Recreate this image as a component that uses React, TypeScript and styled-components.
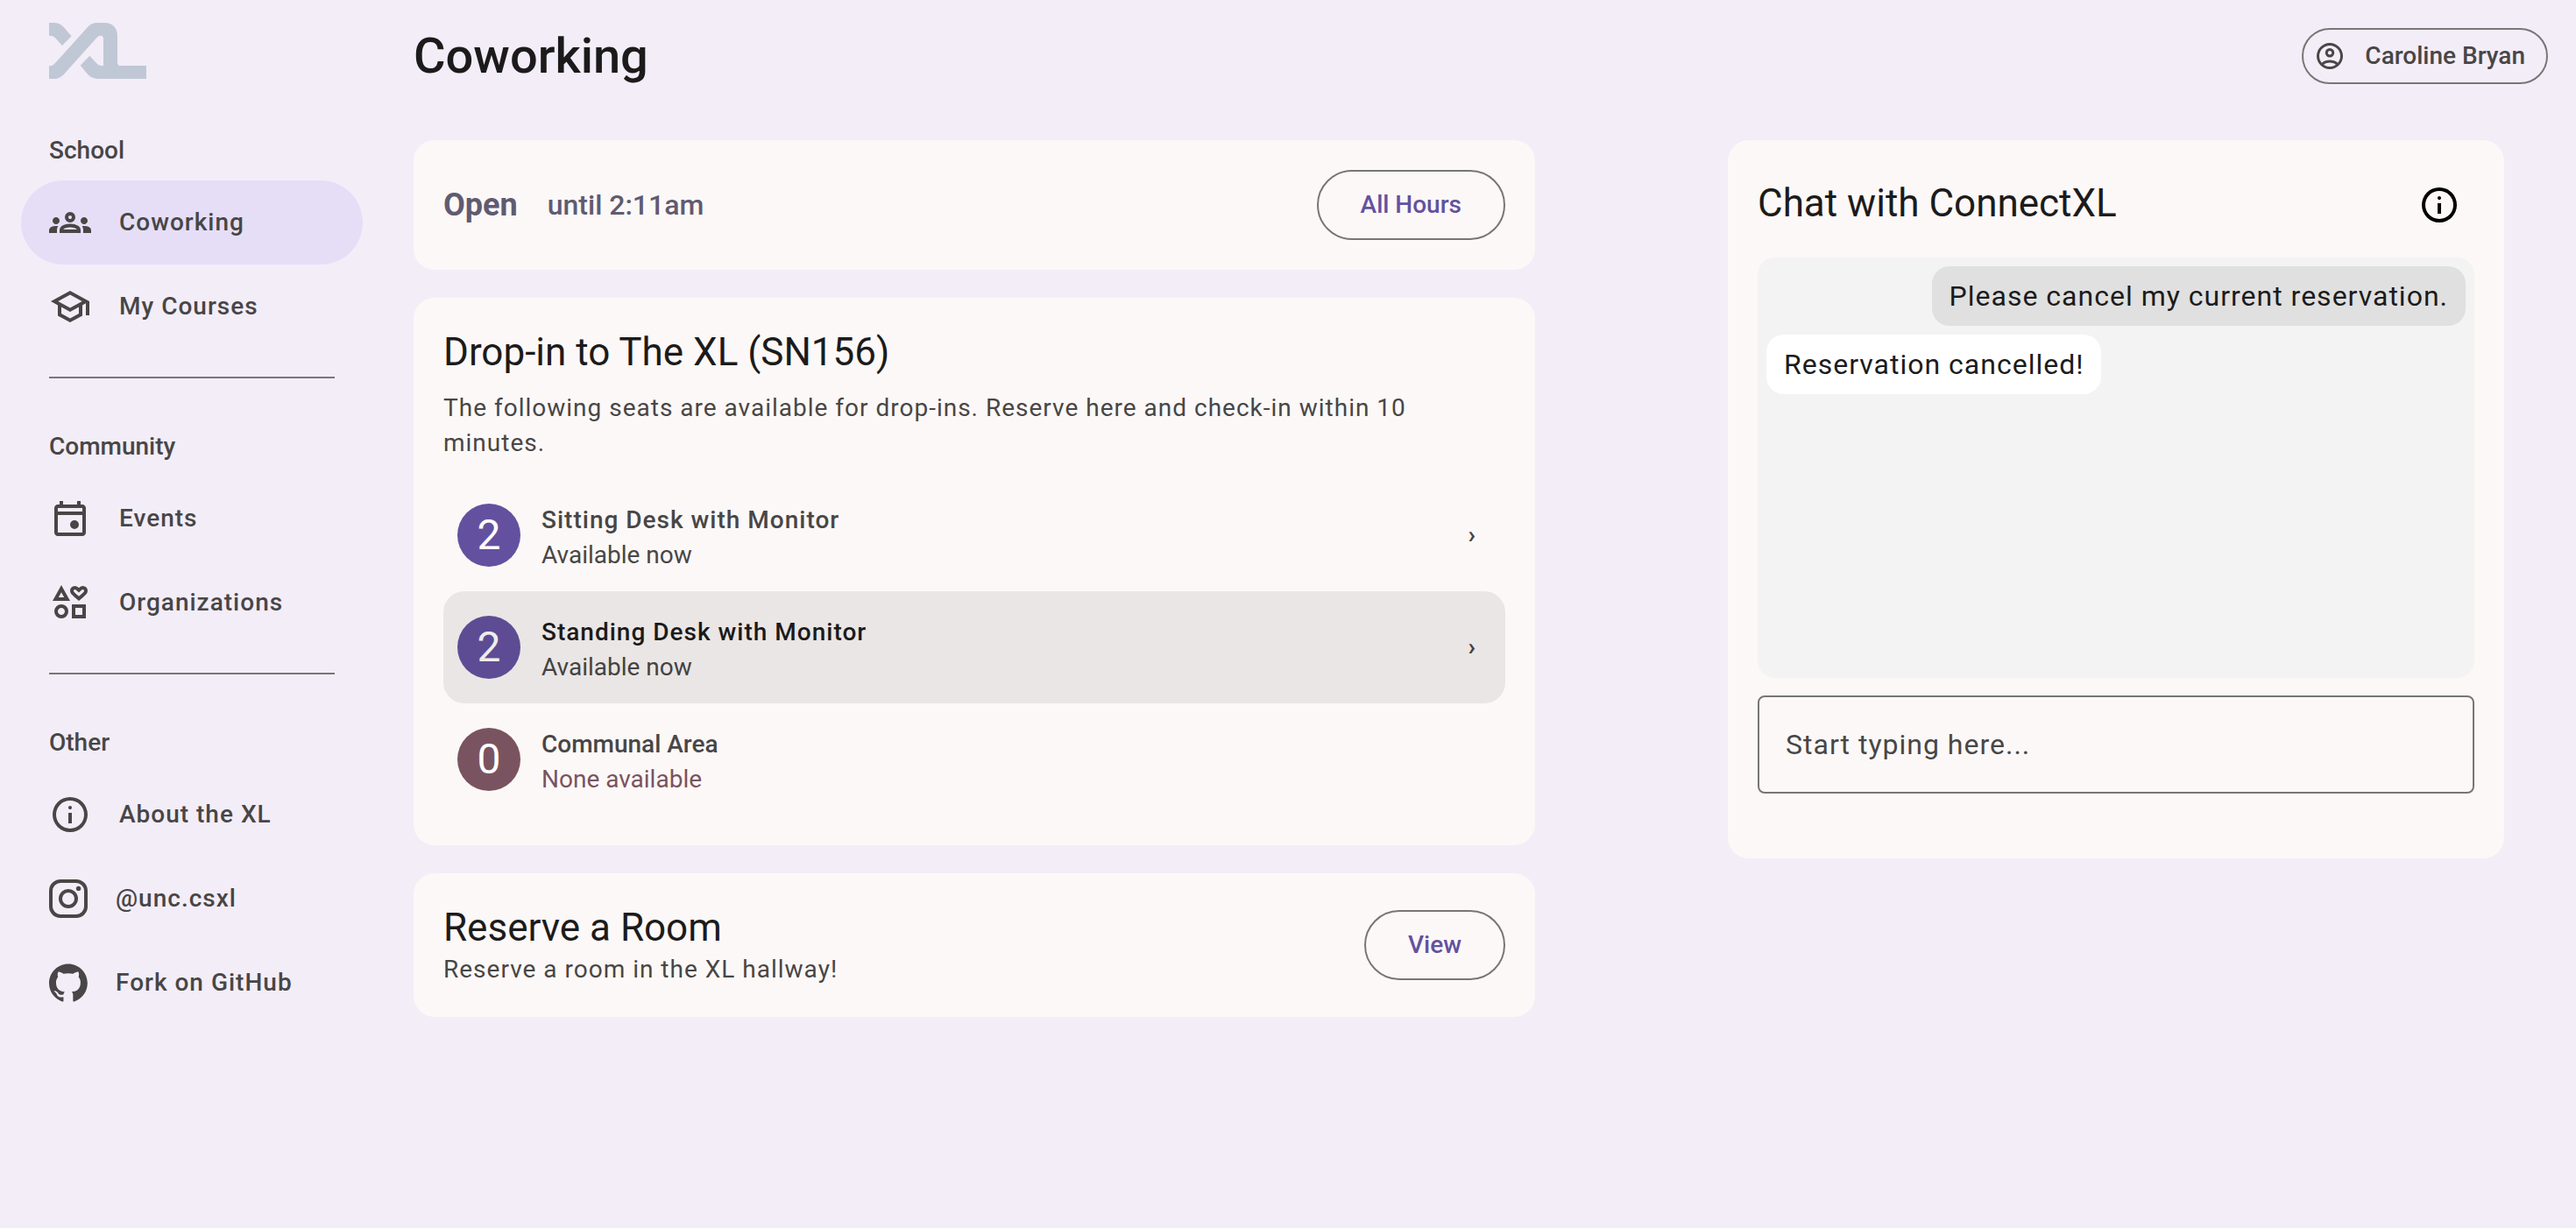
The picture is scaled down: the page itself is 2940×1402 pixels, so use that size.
import React from "react";
import styled, { createGlobalStyle } from "styled-components";

const color = {
  page: "#f3edf8",
  card: "#fcf8f7",
  active: "#e6def6",
  text: "#1c1b1b",
  muted: "#484646",
  outline: "#787675",
  primary: "#63519f",
  secondary: "#605b71",
  tertiary: "#7a5360",
};

const GlobalStyle = createGlobalStyle`
  *, *::before, *::after { box-sizing: border-box; }
  body {
    margin: 0;
    background: ${color.page};
    color: ${color.text};
    font-family: Roboto, "Noto Sans", sans-serif;
    font-size: 28px;
    line-height: 40px;
  }
  h1, h2, h3, p, ul { margin: 0; padding: 0; font-weight: 400; }
  ul { list-style: none; }
  button, input { font: inherit; color: inherit; }
  button { cursor: pointer; }
  a { color: inherit; text-decoration: none; }
`;

const Shell = styled.div`
  display: flex;
  min-height: 100vh;
`;

const Sidebar = styled.nav`
  flex: 0 0 438px;
  padding: 26px 24px;
  color: ${color.muted};
  font-weight: 500;
`;

const LogoLink = styled.a`
  display: block;
  height: 68px;
  padding-left: 32px;

  svg { display: block; }
`;

const SectionTitle = styled.h3`
  padding: 58px 32px 14px;
  font-size: 28px;
  font-weight: 500;
`;

const NavLink = styled.a<{ $active?: boolean }>`
  display: flex;
  align-items: center;
  gap: 32px;
  height: 96px;
  padding: 0 32px;
  border-radius: 48px;
  letter-spacing: 1px;
  background: ${(p) => (p.$active ? color.active : "transparent")};
`;

const Divider = styled.hr`
  height: 2px;
  margin: 32px 32px 0;
  border: 0;
  background: ${color.outline};
`;

const Main = styled.main`
  flex: 1;
  min-width: 0;
  padding-left: 34px;
`;

const TopBar = styled.header`
  display: flex;
  align-items: center;
  justify-content: space-between;
  height: 128px;
  padding-right: 32px;
`;

const PageTitle = styled.h1`
  font-size: 56px;
  line-height: 64px;
  font-weight: 500;
`;

const UserButton = styled.button`
  display: flex;
  align-items: center;
  gap: 22px;
  height: 64px;
  padding: 0 24px 0 12px;
  border: 2px solid ${color.outline};
  border-radius: 32px;
  background: transparent;
  color: ${color.muted};
  font-weight: 500;
`;

const Columns = styled.div`
  display: grid;
  grid-template-columns: minmax(0, 1280fr) minmax(0, 886fr);
  align-items: start;
  gap: 220px;
  padding: 32px 82px 32px 0;
`;

const Stack = styled.div`
  display: grid;
  gap: 32px;
`;

const Card = styled.section`
  padding: 34px;
  border-radius: 24px;
  background: ${color.card};
`;

const SplitRow = styled.div`
  display: flex;
  align-items: center;
  justify-content: space-between;
`;

const CardTitle = styled.h2`
  font-size: 44px;
  line-height: 56px;
`;

const ChatTitle = styled(CardTitle)`
  padding-bottom: 4px;
`;

const Hours = styled.p`
  display: flex;
  align-items: center;
  gap: 34px;
  font-size: 32px;
  font-weight: 500;
  color: ${color.secondary};
`;

const OpenLabel = styled.strong`
  font-size: 36px;
  font-weight: 700;
`;

const OutlineButton = styled.button`
  height: 80px;
  padding: 0 48px;
  border: 2px solid ${color.outline};
  border-radius: 40px;
  background: transparent;
  color: ${color.primary};
  font-weight: 500;
`;

const Body = styled.p`
  letter-spacing: 1px;
  color: ${color.muted};
`;

const SeatIntro = styled(Body)`
  margin: 16px 0 21px;
`;

const SeatRow = styled.button<{ $hovered?: boolean }>`
  position: relative;
  display: flex;
  align-items: center;
  gap: 24px;
  width: 100%;
  height: 128px;
  padding: 0 34px 0 16px;
  border: 0;
  border-radius: 24px;
  background: transparent;
  color: ${(p) => (p.$hovered ? color.text : color.muted)};
  text-align: left;
  overflow: hidden;

  &::after {
    content: "";
    position: absolute;
    inset: 0;
    background: ${color.text};
    opacity: ${(p) => (p.$hovered ? 0.08 : 0)};
  }
`;

const Count = styled.span<{ $empty: boolean }>`
  display: flex;
  align-items: center;
  justify-content: center;
  width: 72px;
  height: 72px;
  border-radius: 50%;
  background: ${(p) => (p.$empty ? color.tertiary : color.primary)};
  color: #fff;
  font-size: 48px;
`;

const SeatText = styled.span`
  display: grid;
  flex: 1;
  padding-top: 6px;
`;

const SeatName = styled.span<{ $empty: boolean }>`
  font-weight: 500;
  letter-spacing: ${(p) => (p.$empty ? "normal" : "1px")};
`;

const SeatStatus = styled.span<{ $empty: boolean }>`
  color: ${(p) => (p.$empty ? color.tertiary : color.muted)};
`;

const Chevron = styled.span`
  font-weight: 700;
  color: ${color.muted};
`;

const IconButton = styled.button`
  display: grid;
  place-items: center;
  width: 80px;
  height: 80px;
  padding: 0;
  border: 0;
  border-radius: 50%;
  background: transparent;
  color: #000;
`;

const Messages = styled.div`
  display: flex;
  flex-direction: column;
  gap: 10px;
  height: 480px;
  margin: 20px 0;
  padding: 10px;
  border-radius: 20px;
  background: #f3f3f3;
  overflow-y: auto;
`;

const Bubble = styled.p<{ $mine?: boolean }>`
  align-self: ${(p) => (p.$mine ? "flex-end" : "flex-start")};
  padding: 10px 20px;
  border-radius: 20px;
  background: ${(p) => (p.$mine ? "#e0e0e0" : "#fff")};
  font-size: 32px;
  line-height: 48px;
  letter-spacing: 1px;
`;

const ChatInput = styled.input`
  display: block;
  width: 100%;
  height: 112px;
  margin-bottom: 40px;
  padding: 0 30px;
  border: 2px solid ${color.outline};
  border-radius: 8px;
  background: transparent;
  font-size: 32px;
  letter-spacing: 1px;
  outline: none;

  &::placeholder { color: ${color.muted}; opacity: 1; }
`;

const symbols = {
  groups:
    "M0-240v-63q0-43 44-70t116-27q13 0 25 .5t23 2.5q-14 21-21 44t-7 48v65H0Zm240 0v-65q0-32 17.5-58.5T307-410q32-20 76.5-30t96.5-10q53 0 97.5 10t76.5 30q32 20 49 46.5t17 58.5v65H240Zm540 0v-65q0-26-6.5-49T754-397q11-2 22.5-2.5t23.5-.5q72 0 116 26.5t44 70.5v63H780Zm-455-80h311q-10-20-55.5-35T480-370q-55 0-100.5 15T325-320ZM160-440q-33 0-56.5-23.5T80-520q0-34 23.5-57t56.5-23q34 0 57 23t23 57q0 33-23 56.5T160-440Zm640 0q-33 0-56.5-23.5T720-520q0-34 23.5-57t56.5-23q34 0 57 23t23 57q0 33-23 56.5T800-440Zm-320-40q-50 0-85-35t-35-85q0-51 35-85.5t85-34.5q51 0 85.5 34.5T600-600q0 50-34.5 85T480-480Zm0-80q17 0 28.5-11.5T520-600q0-17-11.5-28.5T480-640q-17 0-28.5 11.5T440-600q0 17 11.5 28.5T480-560Z",
  school:
    "M480-120 200-272v-240L40-600l440-240 440 240v320h-80v-276l-80 44v240L480-120Zm0-332 274-148-274-148-274 148 274 148Zm0 241 200-108v-151L480-360 280-470v151l200 108Z",
  event:
    "M580-240q-42 0-71-29t-29-71q0-42 29-71t71-29q42 0 71 29t29 71q0 42-29 71t-71 29ZM200-80q-33 0-56.5-23.5T120-160v-560q0-33 23.5-56.5T200-800h40v-80h80v80h320v-80h80v80h40q33 0 56.5 23.5T840-720v560q0 33-23.5 56.5T760-80H200Zm0-80h560v-400H200v400Zm0-480h560v-80H200v80Z",
  interests:
    "m80-520 200-360 200 360H80Zm200 400q-66 0-113-47t-47-113q0-67 47-113.5T280-440q66 0 113 47t47 113q0 66-47 113t-113 47Zm0-80q33 0 56.5-23.5T360-280q0-33-23.5-56.5T280-360q-33 0-56.5 23.5T200-280q0 33 23.5 56.5T280-200Zm-64-400h128l-64-115-64 115Zm304 480v-320h320v320H520Zm80-80h160v-160H600v160Zm80-320q-57-48-95.5-81T523-659q-23-25-33-47t-10-47q0-45 31.5-76t78.5-31q27 0 50.5 12.5T680-813q16-22 39.5-34.5T770-860q47 0 78.5 31t31.5 76q0 25-10 47t-33 47q-23 25-61.5 58T680-520Zm0-105q72-60 96-85t24-41q0-13-7.5-21t-20.5-8q-10 0-19.5 5.5T729-755l-49 47-49-47q-14-14-23.5-19.5T588-780q-13 0-20.5 8t-7.5 21q0 16 24 41t96 85Z",
  info:
    "M440-280h80v-240h-80v240Zm40-320q17 0 28.5-11.5T520-640q0-17-11.5-28.5T480-680q-17 0-28.5 11.5T440-640q0 17 11.5 28.5T480-600Zm0 520q-83 0-156-31.5T197-197q-54-54-85.5-127T80-480q0-83 31.5-156T197-763q54-54 127-85.5T480-880q83 0 156 31.5T763-763q54 54 85.5 127T880-480q0 83-31.5 156T763-197q-54 54-127 85.5T480-80Zm0-80q134 0 227-93t93-227q0-134-93-227t-227-93q-134 0-227 93t-93 227q0 134 93 227t227 93Z",
  account:
    "M234-276q51-39 114-61.5T480-360q69 0 132 22.5T726-276q35-41 54.5-93T800-480q0-133-93.5-226.5T480-800q-133 0-226.5 93.5T160-480q0 59 19.5 111t54.5 93Zm246-164q-59 0-99.5-40.5T340-580q0-59 40.5-99.5T480-720q59 0 99.5 40.5T620-580q0 59-40.5 99.5T480-440Zm0 360q-83 0-156-31.5T197-197q-54-54-85.5-127T80-480q0-83 31.5-156T197-763q54-54 127-85.5T480-880q83 0 156 31.5T763-763q54 54 85.5 127T880-480q0 83-31.5 156T763-197q-54 54-127 85.5T480-80Zm0-80q53 0 100-15.5t86-44.5q-39-29-86-44.5T480-280q-53 0-100 15.5T294-220q39 29 86 44.5T480-160Zm0-360q26 0 43-17t17-43q0-26-17-43t-43-17q-26 0-43 17t-17 43q0 26 17 43t43 17Z",
};

function SymbolIcon({ name, size = 48 }: { name: keyof typeof symbols; size?: number }) {
  return (
    <svg width={size} height={size} viewBox="0 -960 960 960" fill="currentColor" aria-hidden="true">
      <path d={symbols[name]} />
    </svg>
  );
}

function Logo() {
  return (
    <svg width="111" height="64" viewBox="0 0 333 192" fill="#c0c8d6" aria-hidden="true">
      <path d="M0 0H18C31 0 40 5 48 13L77 46L45 78L21 52C16 46 11 44 0 44Z" />
      <path d="M0 148H3C11 147 16 144 21 138L130 17C141 5 151 0 166 0H190C217 0 234 18 234 44V137C235 144 238 147 244 147H333V192H166C153 191 142 187 133 177L107 146L139 113L162 138C168 145 173 147 179 147H186V56C186 47 183 44 176 44C171 44 168 46 164 50L53 174C41 187 31 192 17 192H0Z" />
    </svg>
  );
}

function InstagramIcon() {
  return (
    <svg width="44" height="44" viewBox="0 0 44 44" fill="none" stroke="currentColor" strokeWidth="4" aria-hidden="true">
      <rect x="2" y="2" width="40" height="40" rx="11" />
      <circle cx="22" cy="22" r="9" />
      <circle cx="33.6" cy="10.4" r="2.7" fill="currentColor" stroke="none" />
    </svg>
  );
}

function GithubIcon() {
  return (
    <svg width="44" height="44" viewBox="0 0 98 96" fill="currentColor" aria-hidden="true">
      <path d="M48.854 0C21.839 0 0 22 0 49.217c0 21.756 13.993 40.172 33.405 46.69 2.427.49 3.316-1.059 3.316-2.362 0-1.141-.08-5.052-.08-9.127-13.59 2.934-16.42-5.867-16.42-5.867-2.184-5.704-5.42-7.17-5.42-7.17-4.448-3.015.324-3.015.324-3.015 4.934.326 7.523 5.052 7.523 5.052 4.367 7.496 11.404 5.378 14.235 4.074.404-3.178 1.699-5.378 3.074-6.6-10.839-1.141-22.243-5.378-22.243-24.283 0-5.378 1.94-9.778 5.014-13.2-.485-1.222-2.184-6.275.486-13.038 0 0 4.125-1.304 13.426 5.052a46.97 46.97 0 0 1 12.214-1.63c4.125 0 8.33.571 12.213 1.63 9.302-6.356 13.427-5.052 13.427-5.052 2.67 6.763.97 11.816.485 13.038 3.155 3.422 5.015 7.822 5.015 13.2 0 18.905-11.404 23.06-22.324 24.283 1.78 1.548 3.316 4.481 3.316 9.126 0 6.6-.08 11.897-.08 13.526 0 1.304.89 2.853 3.316 2.364 19.412-6.52 33.405-24.935 33.405-46.691C97.707 22 75.788 0 48.854 0z" />
    </svg>
  );
}

const sections = [
  {
    title: "School",
    links: [
      { label: "Coworking", icon: <SymbolIcon name="groups" />, active: true },
      { label: "My Courses", icon: <SymbolIcon name="school" /> },
    ],
  },
  {
    title: "Community",
    links: [
      { label: "Events", icon: <SymbolIcon name="event" /> },
      { label: "Organizations", icon: <SymbolIcon name="interests" /> },
    ],
  },
  {
    title: "Other",
    links: [
      { label: "About the XL", icon: <SymbolIcon name="info" /> },
      { label: "@unc.csxl", icon: <InstagramIcon /> },
      { label: "Fork on GitHub", icon: <GithubIcon /> },
    ],
  },
];

const seats = [
  { name: "Sitting Desk with Monitor", count: 2 },
  { name: "Standing Desk with Monitor", count: 2, hovered: true },
  { name: "Communal Area", count: 0 },
];

export default function App() {
  return (
    <>
      <GlobalStyle />
      <Shell>
        <Sidebar aria-label="Main">
          <LogoLink href="#" aria-label="XL home">
            <Logo />
          </LogoLink>
          {sections.map((section, i) => (
            <section key={section.title}>
              {i > 0 && <Divider />}
              <SectionTitle>{section.title}</SectionTitle>
              {section.links.map((link) => (
                <NavLink key={link.label} href="#" $active={"active" in link && link.active}>
                  {link.icon}
                  {link.label}
                </NavLink>
              ))}
            </section>
          ))}
        </Sidebar>
        <Main>
          <TopBar>
            <PageTitle>Coworking</PageTitle>
            <UserButton type="button">
              <SymbolIcon name="account" size={36} />
              Caroline Bryan
            </UserButton>
          </TopBar>
          <Columns>
            <Stack>
              <Card>
                <SplitRow>
                  <Hours>
                    <OpenLabel>Open</OpenLabel>
                    <span>until 2:11am</span>
                  </Hours>
                  <OutlineButton type="button">All Hours</OutlineButton>
                </SplitRow>
              </Card>
              <Card>
                <CardTitle>Drop-in to The XL (SN156)</CardTitle>
                <SeatIntro>
                  The following seats are available for drop-ins. Reserve here and check-in within 10 minutes.
                </SeatIntro>
                <ul>
                  {seats.map((seat) => (
                    <li key={seat.name}>
                      <SeatRow type="button" $hovered={seat.hovered}>
                        <Count $empty={seat.count === 0}>{seat.count}</Count>
                        <SeatText>
                          <SeatName $empty={seat.count === 0}>{seat.name}</SeatName>
                          <SeatStatus $empty={seat.count === 0}>
                            {seat.count > 0 ? "Available now" : "None available"}
                          </SeatStatus>
                        </SeatText>
                        {seat.count > 0 && <Chevron>›</Chevron>}
                      </SeatRow>
                    </li>
                  ))}
                </ul>
              </Card>
              <Card>
                <SplitRow>
                  <div>
                    <CardTitle>Reserve a Room</CardTitle>
                    <Body>Reserve a room in the XL hallway!</Body>
                  </div>
                  <OutlineButton type="button">View</OutlineButton>
                </SplitRow>
              </Card>
            </Stack>
            <Card>
              <SplitRow>
                <ChatTitle>Chat with ConnectXL</ChatTitle>
                <IconButton type="button" aria-label="About this chat">
                  <SymbolIcon name="info" />
                </IconButton>
              </SplitRow>
              <Messages>
                <Bubble $mine>Please cancel my current reservation.</Bubble>
                <Bubble>Reservation cancelled!</Bubble>
              </Messages>
              <ChatInput type="text" aria-label="Message" placeholder="Start typing here..." />
            </Card>
          </Columns>
        </Main>
      </Shell>
    </>
  );
}
